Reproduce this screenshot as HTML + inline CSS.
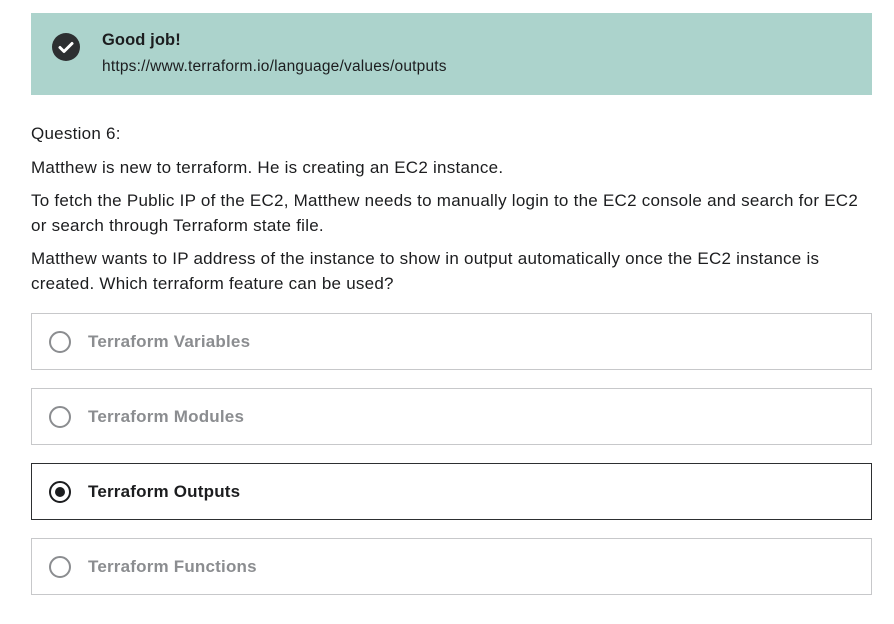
<!DOCTYPE html>
<html><head><style>
body{margin:0;background:#fff;font-family:"Liberation Sans",sans-serif;color:#1c1d1f;width:894px;height:624px;overflow:hidden;position:relative}
.banner{position:absolute;left:31px;top:13px;width:841px;height:82px;background:#acd3cc}
.ic{position:absolute;left:21px;top:20px;width:28px;height:28px;border-radius:50%;background:#2d2f31}
.t1{position:absolute;left:71px;top:18px;font-weight:bold;font-size:16.5px;letter-spacing:0.1px}
.t2{position:absolute;left:71px;top:45px;font-size:15.5px;letter-spacing:0.2px}
.p{position:absolute;left:31px;font-size:17px;line-height:25px;width:840px;letter-spacing:0.25px}
.opt{position:absolute;left:31px;width:839px;height:55px;border:1px solid #c7c8ca}
.opt.sel{border-color:#2d2f31}
.r{position:absolute;left:17px;top:17px;width:18px;height:18px;border:2px solid #8b8d90;border-radius:50%}
.sel .r{border-color:#1c1d1f}
.sel .r:after{content:"";position:absolute;left:4px;top:4px;width:10px;height:10px;border-radius:50%;background:#1c1d1f}
.ol{position:absolute;left:56px;top:18px;font-size:17px;font-weight:bold;color:#8b8d90;letter-spacing:0.2px}
.sel .ol{color:#1c1d1f}
</style></head><body>
<div class="banner">
<div class="ic"><svg width="28" height="28"><path d="M8 14.5l4 4 8-8" stroke="#fff" stroke-width="3" fill="none" stroke-linecap="round" stroke-linejoin="round"/></svg></div>
<div class="t1">Good job!</div>
<div class="t2">https://www.terraform.io/language/values/outputs</div>
</div>
<div class="p" style="top:121px">Question 6:</div>
<div class="p" style="top:155px">Matthew is new to terraform. He is creating an EC2 instance.</div>
<div class="p" style="top:188px">To fetch the Public IP of the EC2, Matthew needs to manually login to the EC2 console and search for EC2 or search through Terraform state file.</div>
<div class="p" style="top:246px">Matthew wants to IP address of the instance to show in output automatically once the EC2 instance is created. Which terraform feature can be used?</div>
<div class="opt" style="top:313px"><div class="r"></div><div class="ol">Terraform Variables</div></div>
<div class="opt" style="top:388px"><div class="r"></div><div class="ol">Terraform Modules</div></div>
<div class="opt sel" style="top:463px"><div class="r"></div><div class="ol">Terraform Outputs</div></div>
<div class="opt" style="top:538px"><div class="r"></div><div class="ol">Terraform Functions</div></div>
</body></html>
